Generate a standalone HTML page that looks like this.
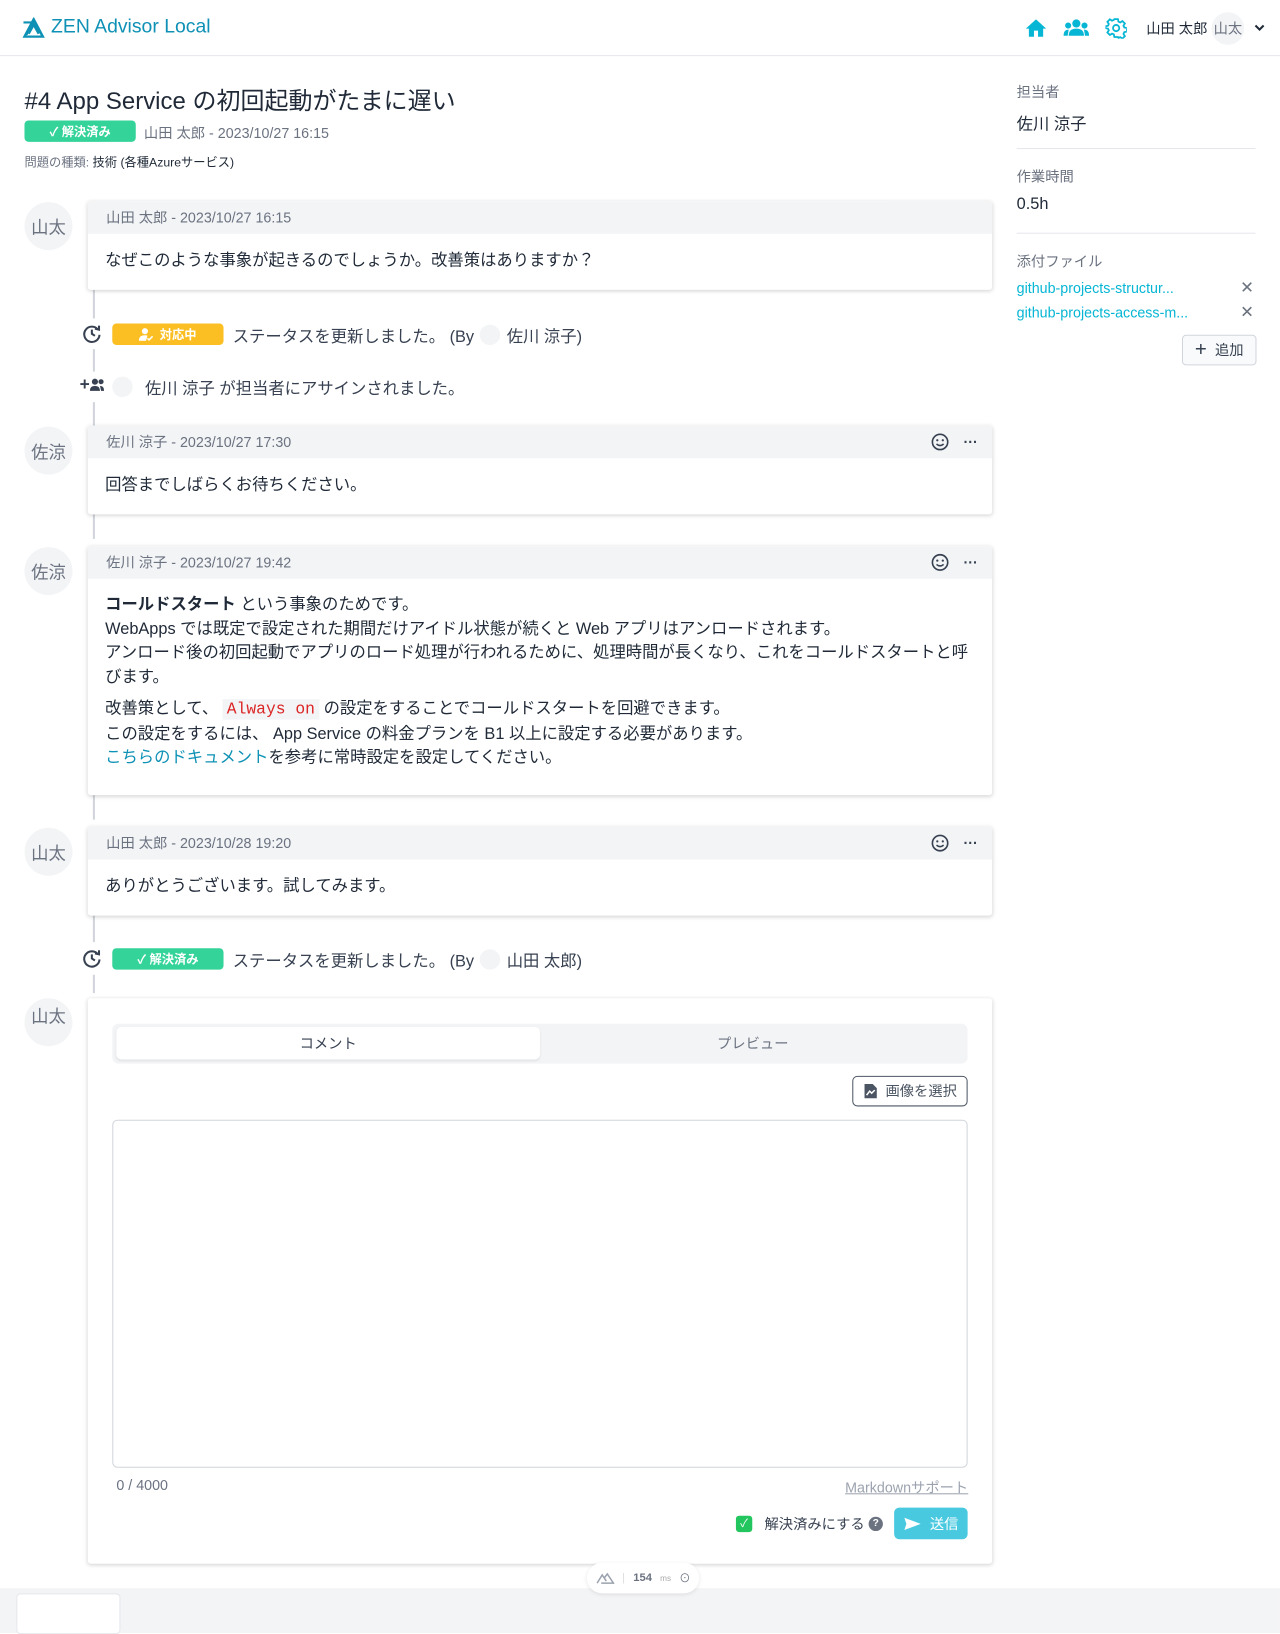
<!DOCTYPE html>
<html><head><meta charset="utf-8"><style>
*{box-sizing:border-box;margin:0;padding:0}
html,body{width:1280px;height:1600px;overflow:hidden;background:#fff}
#w{position:absolute;left:0;top:0;width:1254px;height:1568px;transform:scale(1.0207);transform-origin:0 0;font-family:"Liberation Sans","Noto Sans CJK JP",sans-serif;color:#1f2937}
.a{position:absolute}
.hdr{left:0;top:0;width:1254px;height:55px;border-bottom:1px solid #e5e7eb}
.av{width:47px;height:47px;border-radius:50%;background:#f3f4f6;color:#6b7280;font-size:17px;display:flex;align-items:center;justify-content:center}
.card{left:86px;width:886px;background:#fff;box-shadow:0 1px 4px rgba(0,0,0,.18);border-radius:3px;overflow:hidden}
.ch{height:32px;background:#f3f4f6;color:#6b7280;font-size:14px;line-height:32px;padding-left:18px;position:relative}
.cb{padding:0 17px;font-size:16px;line-height:23.5px;color:#1f2937}
.line{left:91px;width:2px;background:#d1d5db}
.badge{height:22px;border-radius:4px;color:#fff;font-size:12px;font-weight:bold;display:flex;align-items:center;justify-content:center;gap:6px}
.ev{font-size:16px;color:#374151;display:flex;align-items:center}
.dot{display:inline-block;width:20px;height:20px;border-radius:50%;background:#f3f4f6;margin:0 6px}
.icons{position:absolute;right:14px;top:7px;display:flex;gap:14px;align-items:center}
.lab{color:#6b7280;font-size:14px}
.link{color:#06b6d4}
</style></head><body><div id="w">
<div class="a hdr"></div>
<svg class="a" style="left:22px;top:17px" width="22" height="20" viewBox="0 0 22 20"><path d="M2 19 L11 2 L20 19 Z M6 16 L11 7 L16 16" fill="none" stroke="#0e91b5" stroke-width="2.5"/><path d="M1 5 H11 L4 17" fill="none" stroke="#0e91b5" stroke-width="2"/></svg>
<div class="a" style="left:50px;top:16px;font-size:19px;color:#0e91b5">ZEN Advisor Local</div>
<svg class="a" style="left:1004px;top:18px" width="22" height="19" viewBox="0 0 22 19"><path d="M11 1 L21 10 H18 V18 H13 V12 H9 V18 H4 V10 H1 Z" fill="#06b6d4"/></svg>
<svg class="a" style="left:1042px;top:18px" width="25" height="18" viewBox="0 0 25 18"><circle cx="12.5" cy="5" r="4" fill="#06b6d4"/><circle cx="4.5" cy="7" r="3" fill="#06b6d4"/><circle cx="20.5" cy="7" r="3" fill="#06b6d4"/><path d="M5 17 Q5 10 12.5 10 Q20 10 20 17Z M0 17 Q0 11 5 11 L4 17Z M25 17 Q25 11 20 11 L21 17Z" fill="#06b6d4"/></svg>
<svg class="a" style="left:1083px;top:17px" width="21" height="21" viewBox="0 0 24 24"><path d="M10 2h4l.6 2.8 2 .9 2.4-1.6 2.8 2.8-1.6 2.4.9 2 2.9.7v4l-2.9.6-.9 2 1.6 2.4-2.8 2.8-2.4-1.6-2 .9L14 22h-4l-.6-2.9-2-.9L5 19.8 2.2 17l1.6-2.4-.9-2L0 12v-2l2.9-.6.9-2L2.2 5 5 2.2l2.4 1.6 2-.9Z" fill="none" stroke="#06b6d4" stroke-width="2"/><circle cx="12" cy="12" r="3.5" fill="none" stroke="#06b6d4" stroke-width="2"/></svg>
<div class="a" style="left:1123px;top:18px;font-size:14px;color:#1f2937">山田 太郎</div>
<div class="a av" style="left:1187px;top:12px;width:32px;height:32px;font-size:14px">山太</div>
<svg class="a" style="left:1228px;top:23px" width="12" height="8" viewBox="0 0 12 8"><path d="M2 2 L6 6 L10 2" fill="none" stroke="#1f2937" stroke-width="2"/></svg>

<div class="a" style="left:24px;top:80px;font-size:23.5px;color:#1f2937">#4 App Service の初回起動がたまに遅い</div>
<div class="a badge" style="left:24px;top:118px;width:109px;height:21px;background:#34d399">✓ 解決済み</div>
<div class="a" style="left:141px;top:120px;font-size:14px;color:#6b7280">山田 太郎 - 2023/10/27 16:15</div>
<div class="a" style="left:24px;top:150px;font-size:12px;color:#6b7280">問題の種類: <span style="color:#1f2937">技術 (各種Azureサービス)</span></div>

<div class="a lab" style="left:996px;top:80px">担当者</div>
<div class="a" style="left:996px;top:108px;font-size:16px">佐川 涼子</div>
<div class="a" style="left:996px;top:145px;width:234px;height:1px;background:#e5e7eb"></div>
<div class="a lab" style="left:996px;top:163px">作業時間</div>
<div class="a" style="left:996px;top:192px;font-size:16px">0.5h</div>
<div class="a" style="left:996px;top:228px;width:234px;height:1px;background:#e5e7eb"></div>
<div class="a lab" style="left:996px;top:246px">添付ファイル</div>
<div class="a link" style="left:996px;top:274px;font-size:14px">github-projects-structur...</div>
<div class="a link" style="left:996px;top:298px;font-size:14px">github-projects-access-m...</div>
<div class="a" style="left:1215px;top:272px;color:#6b7280;font-size:16px">✕</div>
<div class="a" style="left:1215px;top:296px;color:#6b7280;font-size:16px">✕</div>
<div class="a" style="left:1158px;top:328px;width:73px;height:30px;border:1px solid #d1d5db;border-radius:4px;background:#f9fafb;font-size:14px;color:#374151;display:flex;align-items:center;justify-content:center;gap:8px"><span style="font-size:20px;font-weight:300">+</span>追加</div>

<div class="a line" style="top:284px;height:28px"></div>
<div class="a line" style="top:342px;height:22px"></div>
<div class="a line" style="top:394px;height:23px"></div>
<div class="a line" style="top:504px;height:24px"></div>
<div class="a line" style="top:779px;height:24px"></div>
<div class="a line" style="top:897px;height:26px"></div>
<div class="a line" style="top:955px;height:18px"></div>

<div class="a av" style="left:24px;top:198px">山太</div>
<div class="a card" style="top:197px;height:87px"><div class="ch">山田 太郎 - 2023/10/27 16:15</div><div class="cb" style="padding-top:15px">なぜこのような事象が起きるのでしょうか。改善策はありますか？</div></div>

<svg class="a" style="left:80px;top:317px" width="20" height="20" viewBox="0 0 20 20"><path d="M16 6 A7.5 7.5 0 1 0 17.5 11" fill="none" stroke="#374151" stroke-width="2"/><path d="M13 5 L17 6 L17 2" fill="none" stroke="#374151" stroke-width="2"/><path d="M10 6 V10 L13 12" fill="none" stroke="#374151" stroke-width="2"/></svg>
<div class="a badge" style="left:110px;top:317px;width:109px;height:21px;background:#fbbf24"><svg width="14" height="13" viewBox="0 0 14 13"><circle cx="6" cy="3.5" r="3" fill="#fff"/><path d="M0 13 Q0 7.5 6 7.5 Q8 7.5 8.5 8 L7 13Z" fill="#fff"/><path d="M8.5 10.5 L10 12 L13.5 8.5" stroke="#fff" stroke-width="1.5" fill="none"/></svg>対応中</div>
<div class="a ev" style="left:228px;top:316px">ステータスを更新しました。 (By<span class="dot"></span>佐川 涼子)</div>

<div class="a" style="left:78px;top:367px;font-size:17px;font-weight:bold;color:#374151">+</div>
<svg class="a" style="left:88px;top:370px" width="14" height="14" viewBox="0 0 14 14"><circle cx="5" cy="4" r="3" fill="#374151"/><circle cx="11" cy="4" r="2.5" fill="#374151"/><path d="M0 13 Q0 8 5 8 Q10 8 10 13Z M10 8 Q14 8 14 13 H11Z" fill="#374151"/></svg>
<div class="a ev" style="left:104px;top:367px"><span class="dot" style="margin-left:6px;margin-right:12px"></span>佐川 涼子 が担当者にアサインされました。</div>

<div class="a av" style="left:24px;top:418px">佐涼</div>
<div class="a card" style="top:417px;height:87px"><div class="ch">佐川 涼子 - 2023/10/27 17:30<div class="icons"><svg width="18" height="18" viewBox="0 0 18 18"><circle cx="9" cy="9" r="7.5" fill="none" stroke="#374151" stroke-width="1.6"/><circle cx="6.3" cy="7.3" r="1.1" fill="#374151"/><circle cx="11.7" cy="7.3" r="1.1" fill="#374151"/><path d="M5.5 11 Q9 14 12.5 11" fill="none" stroke="#374151" stroke-width="1.5"/></svg><span style="font-size:14px;font-weight:bold;color:#374151;line-height:18px">···</span></div></div><div class="cb" style="padding-top:15px">回答までしばらくお待ちください。</div></div>

<div class="a av" style="left:24px;top:536px">佐涼</div>
<div class="a card" style="top:535px;height:244px"><div class="ch">佐川 涼子 - 2023/10/27 19:42<div class="icons"><svg width="18" height="18" viewBox="0 0 18 18"><circle cx="9" cy="9" r="7.5" fill="none" stroke="#374151" stroke-width="1.6"/><circle cx="6.3" cy="7.3" r="1.1" fill="#374151"/><circle cx="11.7" cy="7.3" r="1.1" fill="#374151"/><path d="M5.5 11 Q9 14 12.5 11" fill="none" stroke="#374151" stroke-width="1.5"/></svg><span style="font-size:14px;font-weight:bold;color:#374151;line-height:18px">···</span></div></div>
<div class="cb" style="padding-top:14px"><b>コールドスタート</b> という事象のためです。<br>WebApps では既定で設定された期間だけアイドル状態が続くと Web アプリはアンロードされます。<br>アンロード後の初回起動でアプリのロード処理が行われるために、処理時間が長くなり、これをコールドスタートと呼びます。
<div style="height:8px"></div>改善策として、 <span style="font-family:'Liberation Mono',monospace;color:#dc2626;background:#f3f4f6;padding:1px 4px">Always on</span> の設定をすることでコールドスタートを回避できます。<br>この設定をするには、 App Service の料金プランを B1 以上に設定する必要があります。<br><span style="color:#0e91b5">こちらのドキュメント</span>を参考に常時設定を設定してください。</div></div>

<div class="a av" style="left:24px;top:811px">山太</div>
<div class="a card" style="top:810px;height:87px"><div class="ch">山田 太郎 - 2023/10/28 19:20<div class="icons"><svg width="18" height="18" viewBox="0 0 18 18"><circle cx="9" cy="9" r="7.5" fill="none" stroke="#374151" stroke-width="1.6"/><circle cx="6.3" cy="7.3" r="1.1" fill="#374151"/><circle cx="11.7" cy="7.3" r="1.1" fill="#374151"/><path d="M5.5 11 Q9 14 12.5 11" fill="none" stroke="#374151" stroke-width="1.5"/></svg><span style="font-size:14px;font-weight:bold;color:#374151;line-height:18px">···</span></div></div><div class="cb" style="padding-top:15px">ありがとうございます。試してみます。</div></div>

<svg class="a" style="left:80px;top:929px" width="20" height="20" viewBox="0 0 20 20"><path d="M16 6 A7.5 7.5 0 1 0 17.5 11" fill="none" stroke="#374151" stroke-width="2"/><path d="M13 5 L17 6 L17 2" fill="none" stroke="#374151" stroke-width="2"/><path d="M10 6 V10 L13 12" fill="none" stroke="#374151" stroke-width="2"/></svg>
<div class="a badge" style="left:110px;top:929px;width:109px;height:21px;background:#34d399">✓ 解決済み</div>
<div class="a ev" style="left:228px;top:928px">ステータスを更新しました。 (By<span class="dot"></span>山田 太郎)</div>

<div class="a av" style="left:24px;top:978px;align-items:flex-start;padding-top:4px">山太</div>
<div class="a card" style="top:978px;height:554px"></div>
<div class="a" style="left:110px;top:1003px;width:838px;height:39px;background:#f3f4f6;border-radius:6px"></div>
<div class="a" style="left:114px;top:1006px;width:415px;height:32px;background:#fff;border-radius:5px;box-shadow:0 1px 2px rgba(0,0,0,.08);font-size:14px;color:#374151;text-align:center;line-height:32px">コメント</div>
<div class="a" style="left:530px;top:1006px;width:415px;height:32px;font-size:14px;color:#6b7280;text-align:center;line-height:32px">プレビュー</div>
<div class="a" style="left:835px;top:1054px;width:113px;height:30px;border:1px solid #4b5563;border-radius:5px;font-size:14px;color:#4b5563;display:flex;align-items:center;justify-content:center;gap:8px"><svg width="14" height="16" viewBox="0 0 14 16"><path d="M1 1 H9 L13 5 V15 H1Z" fill="#4b5563"/><path d="M3 12 L6 8 L8 10 L11 7" stroke="#fff" stroke-width="1.5" fill="none"/></svg>画像を選択</div>
<div class="a" style="left:110px;top:1097px;width:838px;height:341px;border:1px solid #d1d5db;border-radius:5px"></div>
<div class="a" style="left:114px;top:1447px;font-size:14px;color:#6b7280">0 / 4000</div>
<div class="a" style="left:828px;top:1447px;font-size:14px;color:#9ca3af;text-decoration:underline">Markdownサポート</div>
<div class="a" style="left:721px;top:1485px;width:16px;height:16px;background:#22c55e;border-radius:3px;color:#fff;font-size:11px;text-align:center;line-height:16px">✓</div>
<div class="a" style="left:749px;top:1483px;font-size:14px;color:#374151">解決済みにする</div>
<div class="a" style="left:851px;top:1486px;width:14px;height:14px;border-radius:50%;background:#6b7280;color:#fff;font-size:10px;font-weight:bold;text-align:center;line-height:14px">?</div>
<div class="a" style="left:876px;top:1477px;width:72px;height:31px;background:#48c9e0;border-radius:5px;color:#fff;font-size:14px;display:flex;align-items:center;justify-content:center;gap:8px"><svg width="18" height="14" viewBox="0 0 18 14"><path d="M1 1 L17 7 L1 13 L3 7Z" fill="#fff"/></svg>送信</div>

<div class="a" style="left:0;top:1556px;width:1254px;height:44px;background:#f3f4f6"></div>
<div class="a" style="left:16px;top:1561px;width:102px;height:40px;background:#fff;border:1px solid #e5e7eb;border-radius:4px"></div>
<div class="a" style="left:575px;top:1531px;width:110px;height:30px;background:#fff;border-radius:15px;box-shadow:0 1px 4px rgba(0,0,0,.1);font-size:11px;color:#6b7280;display:flex;align-items:center;justify-content:center;gap:8px"><svg width="18" height="12" viewBox="0 0 18 12"><path d="M1 11 L6 3 L10 9 M8 6 L11 2 L17 11 H5" fill="none" stroke="#9ca3af" stroke-width="1.5"/></svg><span style="color:#ddd">|</span><b>154</b><span style="font-size:8px;color:#aaa">ms</span><span>⊙</span></div>
</div></body></html>
